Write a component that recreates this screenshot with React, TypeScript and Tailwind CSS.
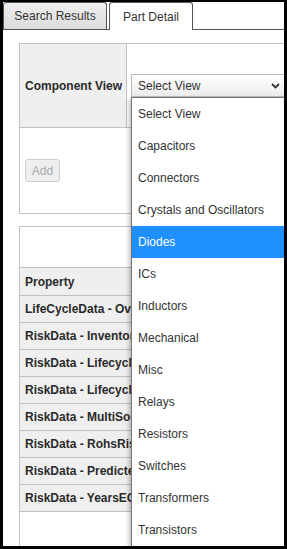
import React from "react";

const items = [
  "Select View",
  "Capacitors",
  "Connectors",
  "Crystals and Oscillators",
  "Diodes",
  "ICs",
  "Inductors",
  "Mechanical",
  "Misc",
  "Relays",
  "Resistors",
  "Switches",
  "Transformers",
  "Transistors",
];

const rows = [
  "LifeCycleData - OverallRisk",
  "RiskData - InventoryRisk",
  "RiskData - LifecycleRisk",
  "RiskData - LifecycleStage",
  "RiskData - MultiSourcingRisk",
  "RiskData - RohsRisk",
  "RiskData - PredictedEOL",
  "RiskData - YearsEOL",
];

export default function App() {
  return (
    <div className="relative w-[287px] h-[549px] overflow-hidden bg-white border-black border-l-[3px] border-r-[3px] border-t-2 border-b-[3px] font-['Liberation_Sans',Arial,sans-serif] text-[12px] text-[#2a2a2a]">
      {/* Tabs */}
      <div className="flex items-end h-[28px] border-b border-[#555]">
        <div className="w-[104px] h-[27px] flex items-center justify-center border border-b-0 border-[#555] rounded-t-[3px] bg-gradient-to-b from-[#efefef] to-[#dcdcdc] text-[#333]">
          Search Results
        </div>
        <div className="ml-[2px] w-[84px] h-[28px] -mb-px flex items-center justify-center border border-b-0 border-[#555] rounded-t-[3px] bg-white text-[#333]">
          Part Detail
        </div>
      </div>

      {/* Content */}
      <div className="pl-[16px] pt-[13px]">
        {/* Panel 1 */}
        <div className="w-[320px] border border-[#c0c0c0]">
          <div className="flex h-[84px] border-b border-[#c0c0c0]">
            <div className="w-[107px] shrink-0 bg-[#efefef] border-r border-[#c0c0c0] flex items-center pl-[5px] font-bold whitespace-nowrap">
              Component View
            </div>
            <div className="flex-1 flex items-center pl-[4px]">
              <div className="relative w-[156px] h-[23px] border border-[#bbb] bg-gradient-to-b from-white to-[#ececec] flex items-center pl-[6px] text-[#333]">
                Select View
                <svg className="absolute right-[6px] top-[8px]" width="9" height="6" viewBox="0 0 9 6">
                  <path d="M1 1 L4.5 4.5 L8 1" fill="none" stroke="#333" strokeWidth="1.8" />
                </svg>
              </div>
            </div>
          </div>
          <div className="h-[85px] flex items-center pl-[5px]">
            <div className="w-[35px] h-[23px] flex items-center justify-center border border-[#cfcfcf] rounded-[3px] bg-[#efefef] text-[#aaa]">
              Add
            </div>
          </div>
        </div>

        {/* Panel 2 */}
        <div className="mt-[12px] w-[320px] border border-[#c0c0c0]">
          <div className="h-[40px]" />
          <div className="h-[28px] border-t border-[#c0c0c0] bg-[#efefef] flex items-center pl-[5px] font-bold whitespace-nowrap">
            Property
          </div>
          {rows.map((r) => (
            <div
              key={r}
              className="h-[27px] border-t border-[#c0c0c0] bg-[#efefef] flex items-center pl-[5px] font-bold whitespace-nowrap"
            >
              <span className="block w-[106px] overflow-hidden">{r}</span>
            </div>
          ))}
          <div className="h-[80px] border-t border-[#c0c0c0]" />
        </div>
      </div>

      {/* Dropdown list */}
      <div className="absolute left-[128px] top-[95px] w-[170px] bg-white border border-[#767676] shadow-[-2px_2px_4px_rgba(0,0,0,0.25)]">
        {items.map((it) => (
          <div
            key={it}
            className={
              it === "Diodes"
                ? "h-[32px] flex items-center pl-[6px] bg-[#1e90ff] text-white whitespace-nowrap"
                : "h-[32px] flex items-center pl-[6px] text-[#333] whitespace-nowrap"
            }
          >
            {it}
          </div>
        ))}
      </div>
    </div>
  );
}
